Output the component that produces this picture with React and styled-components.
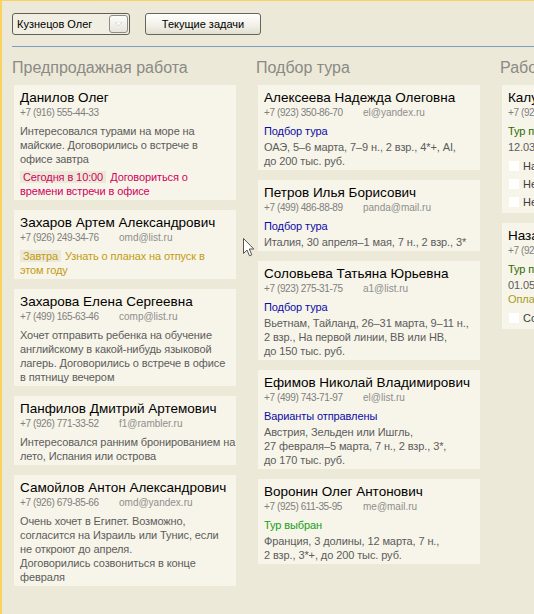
import React from "react";
import styled, { createGlobalStyle } from "styled-components";

const GlobalStyle = createGlobalStyle`
html, body {
  margin: 0;
  padding: 0;
  background: #ECE9D8;
  overflow: hidden;
}
body {
  font-family: "Liberation Sans", Arial, sans-serif;
}
`

const Page = styled.div`
  position: relative;
  box-sizing: border-box;
  min-height: 614px;
  border-top: 1px solid #F9D35E;
  border-left: 2px solid #F9D35E;
  padding: 12px 0 0 10px;
`

const Toolbar = styled.div`
  display: flex;
  align-items: center;
  gap: 15px;
`

const Select = styled.div`
  box-sizing: border-box;
  width: 118px;
  height: 22px;
  display: flex;
  align-items: center;
  justify-content: space-between;
  padding: 0 1px 0 4px;
  border: 1px solid #5F5F55;
  border-radius: 3px;
  background: #F1EFE4;
  font-size: 11px;
  color: #000;
`

const DropBtn = styled.div`
  box-sizing: border-box;
  width: 19px;
  height: 18px;
  display: flex;
  align-items: center;
  justify-content: center;
  border: 1px solid #8E8D84;
  border-radius: 3px;
  background: linear-gradient(#FDFDFB, #E6E4DB);
`

const Button = styled.button`
  box-sizing: border-box;
  width: 116px;
  height: 22px;
  padding: 0;
  border: 1px solid #66655E;
  border-radius: 3px;
  background: linear-gradient(#FFFFFF, #F1EFE6 60%, #E2DFD2);
  font-family: "Liberation Sans", Arial, sans-serif;
  font-size: 11px;
  color: #000;
`

const Divider = styled.div`
  height: 1px;
  margin-top: 11px;
  background: #7F9DC2;
`

const Board = styled.div`
  display: grid;
  grid-template-columns: repeat(3, 224px);
  column-gap: 20px;
  align-items: start;
  margin-top: 11px;
`

const Column = styled.section`
  display: flex;
  flex-direction: column;
`

const Heading = styled.h2`
  margin: 0 0 7px;
  font-size: 16px;
  line-height: 20px;
  font-weight: normal;
  color: #8A8A86;
  white-space: nowrap;
`

const Card = styled.div`
  margin: 0 0 10px 2px;
  padding: 4px 6px 2px;
  background: #F7F5E9;
`

const Name = styled.div`
  font-size: 13.5px;
  line-height: 17px;
  color: #000;
  white-space: nowrap;
`

const Contacts = styled.div`
  font-size: 10px;
  line-height: 13px;
  color: #808080;
  white-space: nowrap;
`

const Phone = styled.span`
  display: inline-block;
  width: 99px;
  letter-spacing: -0.4px;
`

const Email = styled.span`
  color: #8E8E8E;
`

const Text = styled.div`
  margin-top: ${p => p.$gap || 0}px;
  font-size: 11px;
  line-height: 14px;
  letter-spacing: -0.1px;
  color: ${p => p.$color || "#5C5C5C"};
  white-space: pre;
`

const Tag = styled.span`
  padding: 0 3px;
  margin-right: 4px;
  background: #ECE9D8;
`

const Checklist = styled.div`
  margin-top: 3px;
`

const CheckRow = styled.label`
  display: flex;
  align-items: center;
  gap: 4px;
  height: 18px;
  font-size: 11px;
  color: #3C3C3C;
  white-space: nowrap;
`

const Box = styled.span`
  width: 10px;
  height: 10px;
  margin-left: 1px;
  background: #FFFFFF;
`

const Pointer = styled.svg`
  position: absolute;
  left: 241px;
  top: 237px;
`

const columns = [
  {
    title: "Предпродажная работа",
    cards: [
      {
        name: "Данилов Олег",
        phone: "+7 (916) 555-44-33",
        body: "Интересовался турами на море на\nмайские. Договорились о встрече в\nофисе завтра",
        task: { tag: "Сегодня в 10:00", text: "Договориться о\nвремени встречи в офисе", color: "#D2005F" },
      },
      {
        name: "Захаров Артем Александрович",
        phone: "+7 (926) 249-34-76",
        email: "omd@list.ru",
        task: { tag: "Завтра", text: "Узнать о планах на отпуск в\nэтом году", color: "#C29B12" },
      },
      {
        name: "Захарова Елена Сергеевна",
        phone: "+7 (499) 165-63-46",
        email: "comp@list.ru",
        body: "Хочет отправить ребенка на обучение\nанглийскому в какой-нибудь языковой\nлагерь. Договорились о встрече в офисе\nв пятницу вечером",
      },
      {
        name: "Панфилов Дмитрий Артемович",
        phone: "+7 (926) 771-33-52",
        email: "f1@rambler.ru",
        body: "Интересовался ранним бронированием на\nлето, Испания или острова",
      },
      {
        name: "Самойлов Антон Александрович",
        phone: "+7 (926) 679-85-66",
        email: "omd@yandex.ru",
        body: "Очень хочет в Египет. Возможно,\nсогласится на Израиль или Тунис, если\nне откроют до апреля.\nДоговорились созвониться в конце\nфевраля",
      },
    ],
  },
  {
    title: "Подбор тура",
    cards: [
      {
        name: "Алексеева Надежда Олеговна",
        phone: "+7 (923) 350-86-70",
        email: "el@yandex.ru",
        status: { text: "Подбор тура", color: "#0B0BA6" },
        details: "ОАЭ, 5–6 марта, 7–9 н., 2 взр., 4*+, AI,\nдо 200 тыс. руб.",
      },
      {
        name: "Петров Илья Борисович",
        phone: "+7 (499) 486-88-89",
        email: "panda@mail.ru",
        status: { text: "Подбор тура", color: "#0B0BA6" },
        details: "Италия, 30 апреля–1 мая, 7 н., 2 взр., 3*",
      },
      {
        name: "Соловьева Татьяна Юрьевна",
        phone: "+7 (923) 275-31-75",
        email: "a1@list.ru",
        status: { text: "Подбор тура", color: "#0B0BA6" },
        details: "Вьетнам, Тайланд, 26–31 марта, 9–11 н.,\n2 взр., На первой линии, BB или HB,\nдо 150 тыс. руб.",
      },
      {
        name: "Ефимов Николай Владимирович",
        phone: "+7 (499) 743-71-97",
        email: "el@list.ru",
        status: { text: "Варианты отправлены", color: "#0B0BA6" },
        details: "Австрия, Зельден или Ишгль,\n27 февраля–5 марта, 7 н., 2 взр., 3*,\nдо 170 тыс. руб.",
      },
      {
        name: "Воронин Олег Антонович",
        phone: "+7 (925) 611-35-95",
        email: "me@mail.ru",
        status: { text: "Тур выбран", color: "#14A014" },
        details: "Франция, 3 долины, 12 марта, 7 н.,\n2 взр., 3*+, до 200 тыс. руб.",
      },
    ],
  },
  {
    title: "Работа с туристом",
    cards: [
      {
        name: "Калугин Сергей Петрович",
        phone: "+7 (926) 512-40-18",
        email: "kalugin@mail.ru",
        status: { text: "Тур подтвержден", color: "#2E6A00" },
        details: "12.03–19.03, Турция, Кемер, 5*",
        checks: ["Напомнить об оплате", "Не забыть визу", "Не забыть страховку"],
      },
      {
        name: "Назарова Анна Викторовна",
        phone: "+7 (926) 380-22-14",
        email: "anna@list.ru",
        status: { text: "Тур подтвержден", color: "#2E6A00" },
        details: "01.05–08.05, Греция, Крит, 4*",
        note: "Оплачен полностью",
        checks: ["Сообщить время вылета"],
      },
    ],
  },
]

function ClientCard({ c }) {
  return (
    <Card>
      <Name>{c.name}</Name>
      <Contacts>
        <Phone>{c.phone}</Phone>
        {c.email && <Email>{c.email}</Email>}
      </Contacts>
      {c.body && <Text $gap={5}>{c.body}</Text>}
      {c.task && (
        <Text $gap={c.body ? 4 : 5} $color={c.task.color}>
          <Tag>{c.task.tag}</Tag>
          {c.task.text}
        </Text>
      )}
      {c.status && <Text $gap={5} $color={c.status.color}>{c.status.text}</Text>}
      {c.details && <Text $gap={2}>{c.details}</Text>}
      {c.note && <Text $color="#A89C22">{c.note}</Text>}
      {c.checks && (
        <Checklist>
          {c.checks.map(t => (
            <CheckRow key={t}>
              <Box />
              {t}
            </CheckRow>
          ))}
        </Checklist>
      )}
    </Card>
  )
}

export default function App() {
  return (
    <Page>
      <GlobalStyle />
      <Toolbar>
        <Select>
          <span>Кузнецов Олег</span>
          <DropBtn>
            <svg width="7" height="4" viewBox="0 0 7 4">
              <path d="M0 0 L7 0 L3.5 4 Z" fill="#FFFFFF" stroke="#C9C7BC" strokeWidth="0.6" />
            </svg>
          </DropBtn>
        </Select>
        <Button>Текущие задачи</Button>
      </Toolbar>
      <Divider />
      <Board>
        {columns.map(col => (
          <Column key={col.title}>
            <Heading>{col.title}</Heading>
            {col.cards.map(c => <ClientCard key={c.name} c={c} />)}
          </Column>
        ))}
      </Board>
      <Pointer width="12" height="19" viewBox="0 0 12 19">
        <path d="M0.5 0.5 L0.5 15.5 L4 12 L6.5 17.8 L8.8 16.8 L6.3 11 L10.8 11 Z" fill="#FFFFFF" stroke="#55554F" strokeWidth="1" />
      </Pointer>
    </Page>
  )
}
